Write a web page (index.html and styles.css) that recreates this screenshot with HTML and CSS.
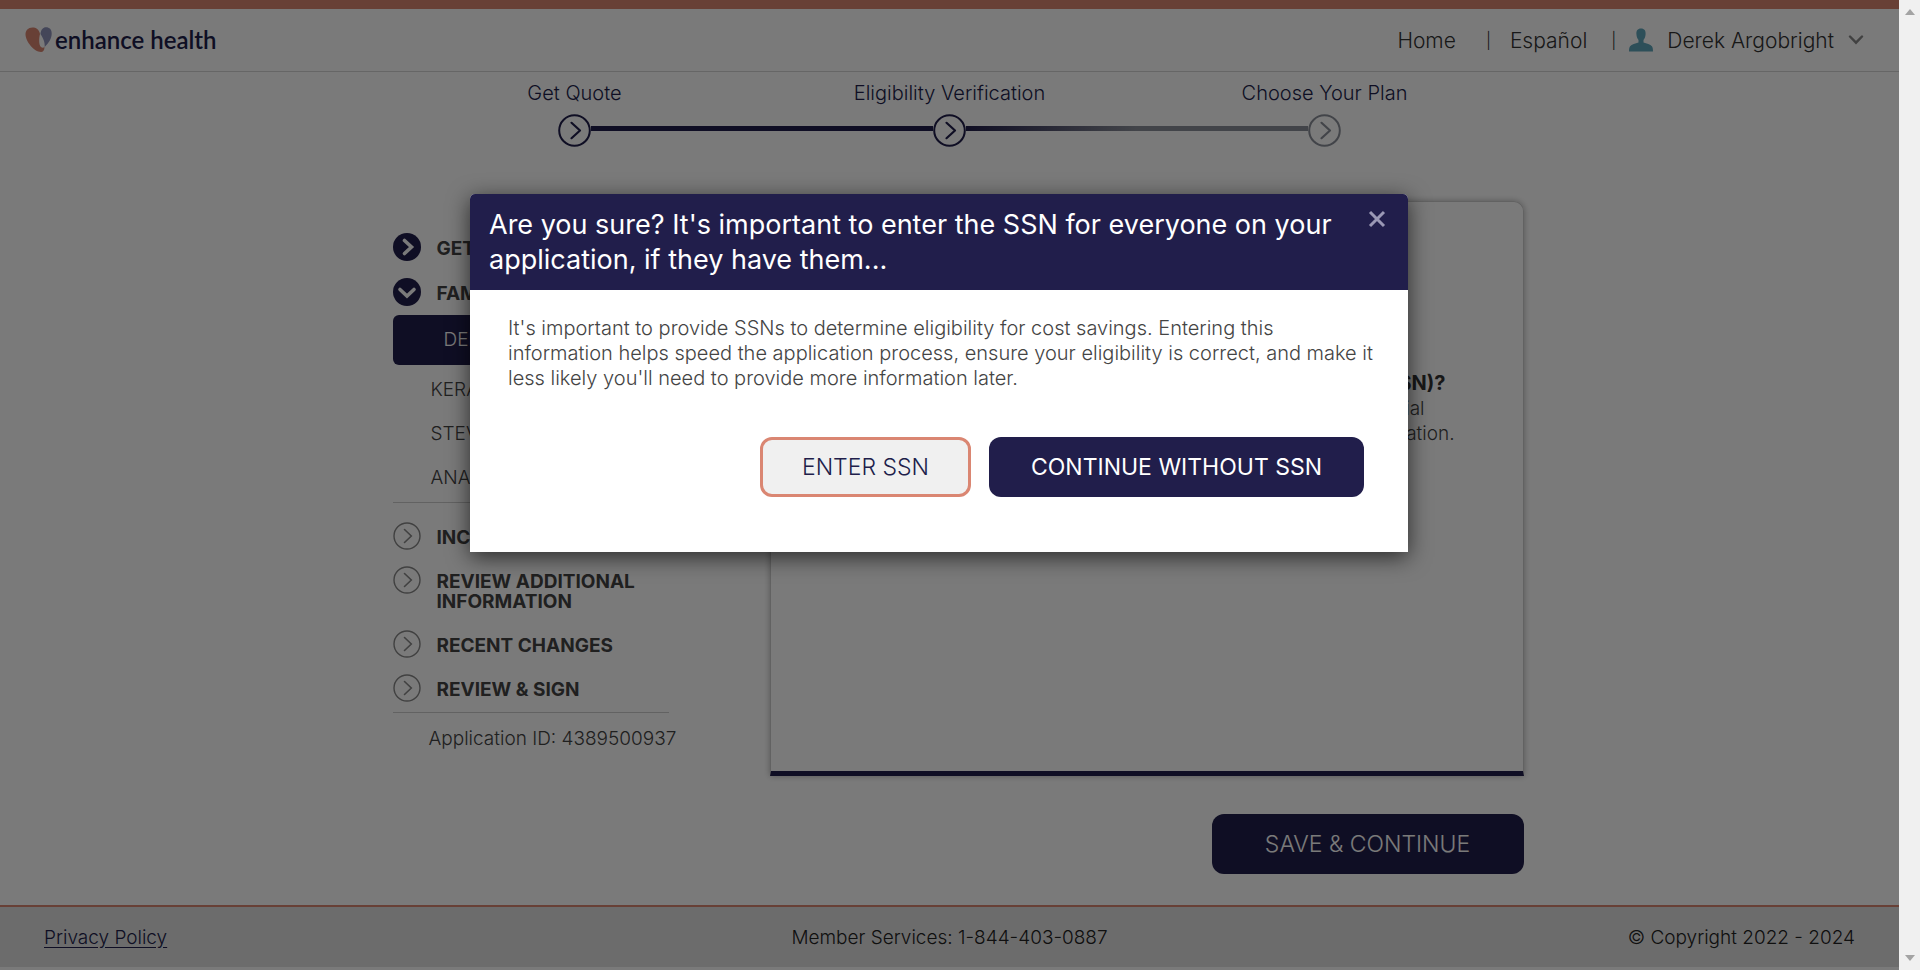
FILE: index.html
```html
<!DOCTYPE html>
<html lang="en">
<head>
<meta charset="utf-8">
<title>Enhance Health - Eligibility Verification</title>
<link rel="stylesheet" href="styles.css">
</head>
<body>
<svg class="defs" aria-hidden="true">
  <symbol id="ring" viewBox="0 0 28 28">
    <circle cx="14" cy="14" r="13" fill="none" stroke="currentColor" stroke-width="1.4"/>
    <path d="M11.5 7.5 18.3 14l-6.8 6.5" fill="none" stroke="currentColor" stroke-width="1.6" stroke-linecap="round"/>
  </symbol>
  <symbol id="step" viewBox="0 0 33 33">
    <circle cx="16.5" cy="16.5" r="15.3" fill="none" stroke="currentColor" stroke-width="2"/>
    <path d="M13.5 8.8 22 16.5l-8.500 7.700" fill="none" stroke="currentColor" stroke-width="2.200" stroke-linecap="round" stroke-linejoin="round"/>
  </symbol>
</svg>
<div class="window">
  <div class="page">
    <header class="header">
      <a class="logo" href="#">
        <svg width="27" height="26" viewBox="0 0 27 26" aria-hidden="true">
          <path d="M15 7C14 2 11 .5 7.500 .5 3 .5.500 3.500.500 7.500.500 14 9 25 16 25c2 0 3.500-1.500 3.500-5-1 1-2.500 1-3.500 0C13.500 17.500 14 11 15 7Z" fill="#da8672"/>
          <path d="M15.500 7C16 2.500 18 .3 21 .3c3.500 0 5.700 2.200 5.700 6.200 0 5-2.700 9-7 13.500C20 14.500 18 11 15.500 7Z" fill="#8f93bb"/>
        </svg>
        <span>enhance health</span>
      </a>
      <nav class="nav">
        <a href="#">Home</a>
        <span class="bar bar-wide">|</span>
        <a href="#">Español</a>
        <span class="bar">|</span>
        <button class="user" type="button">
          <svg width="24" height="24" viewBox="0 0 24 24" aria-hidden="true"><path d="M12 .500c3.500 0 4.800 2.300 4.600 5.500-.1 2.500-.9 4.500-2.100 6v2.500c3 1.200 7 1.800 8.400 3.800.9 1.300 1.100 3.200 1.100 5.200H0c0-2 .2-3.900 1.100-5.200 1.400-2 5.400-2.600 8.400-3.800V12C8.300 10.500 7.500 8.500 7.400 6 7.200 2.800 8.500.500 12 .500Z" fill="#5fa5ba"/></svg>
          <span>Derek Argobright</span>
          <svg class="chev" width="16" height="10" viewBox="0 0 16 10" aria-hidden="true"><path d="M2 1.500 8 7.700l6-6.200" fill="none" stroke="#888" stroke-width="2.400" stroke-linecap="round"/></svg>
        </button>
      </nav>
    </header>

    <ol class="steps">
      <li class="step"><span>Get Quote</span><svg class="dot"><use href="#step"/></svg></li>
      <li class="step done"><span>Eligibility Verification</span><svg class="dot"><use href="#step"/></svg></li>
      <li class="step next"><span>Choose Your Plan</span><svg class="dot"><use href="#step"/></svg></li>
    </ol>

    <main class="main">
      <aside class="side">
        <ul class="list">
          <li class="item"><svg class="ico" viewBox="0 0 28 28"><circle cx="14" cy="14" r="14" fill="#211e4b"/><path d="M11.500 7.500 18.500 14l-7 6.500" fill="none" stroke="#fff" stroke-width="3.600" stroke-linecap="round"/></svg><span>GET</span></li>
          <li class="item open"><svg class="ico" viewBox="0 0 28 28"><circle cx="14" cy="14" r="14" fill="#211e4b"/><path d="M7 11.500 14 18l7-6.500" fill="none" stroke="#fff" stroke-width="3.600" stroke-linecap="round"/></svg><span>FAMILY</span></li>
        </ul>
        <ul class="people">
          <li class="person current">DEREK</li>
          <li class="person">KERA</li>
          <li class="person">STEVEN</li>
          <li class="person">ANA</li>
        </ul>
        <ul class="list later">
          <li class="item"><svg class="ico"><use href="#ring"/></svg><span>INCOME</span></li>
          <li class="item"><svg class="ico"><use href="#ring"/></svg><span>REVIEW ADDITIONAL INFORMATION</span></li>
          <li class="item"><svg class="ico"><use href="#ring"/></svg><span>RECENT CHANGES</span></li>
          <li class="item"><svg class="ico"><use href="#ring"/></svg><span>REVIEW &amp; SIGN</span></li>
        </ul>
        <p class="appid">Application ID: 4389500937</p>
      </aside>
      <section class="content">
        <div class="card">
          <h2 class="question">Social Security number (SSN)?</h2>
          <p class="hint hint-first">Enter the Social</p>
          <p class="hint">Security number for the application.</p>
        </div>
        <button class="btn save" type="button">SAVE &amp; CONTINUE</button>
      </section>
    </main>

    <footer class="footer">
      <a href="#">Privacy Policy</a>
      <span>Member Services: 1-844-403-0887</span>
      <span class="copy">© Copyright 2022 - 2024</span>
    </footer>

    <div class="overlay">
      <div class="modal" role="dialog" aria-modal="true" aria-labelledby="modal-title">
        <div class="modal-head">
          <h1 id="modal-title">Are you sure? It's important to enter the SSN for everyone on your application, if they have them...</h1>
          <button class="close" type="button" aria-label="Close"><svg width="18" height="18" viewBox="0 0 18 18"><path d="M2 2 16 16M16 2 2 16" stroke="#9a98b5" stroke-width="3"/></svg></button>
        </div>
        <div class="modal-body">
          <p>It's important to provide SSNs to determine eligibility for cost savings. Entering this<br>information helps speed the application process, ensure your eligibility is correct, and make it<br>less likely you'll need to provide more information later.</p>
          <div class="actions">
            <button class="btn outline" type="button">ENTER SSN</button>
            <button class="btn primary" type="button">CONTINUE WITHOUT SSN</button>
          </div>
        </div>
      </div>
    </div>
  </div>
  <div class="scroll" aria-hidden="true">
    <svg width="10" height="6" viewBox="0 0 10 6"><path d="M0 6 5 0l5 6Z" fill="#a3a3a3"/></svg>
    <svg width="10" height="6" viewBox="0 0 10 6"><path d="M0 0 5 6l5-6Z" fill="#a3a3a3"/></svg>
  </div>
</div>
</body>
</html>
```
FILE: styles.css
```css
* { box-sizing: border-box; }
body { margin: 0; font: 300 19px/25px Inter, "Open Sans", sans-serif; color: #444; background: #fff; }
ul, ol { margin: 0; padding: 0; list-style: none; }
h1, h2, p { margin: 0; }
a { color: inherit; text-decoration: none; }
button { font: inherit; color: inherit; cursor: pointer; background: none; border: 0; padding: 0; }
.defs { position: absolute; width: 0; height: 0; }
.window { display: flex; min-height: 100vh; }
.page { position: relative; flex: 1; display: flex; flex-direction: column; padding-bottom: 3px; }
.scroll { width: 21px; background: #f0f0f0; display: flex; flex-direction: column; justify-content: space-between; align-items: center; padding: 9px 0; }

.header { display: flex; justify-content: space-between; align-items: center; height: 72px; border-top: 9px solid #da8672; border-bottom: 1px solid #d5d5d5; padding: 0 35px 0 25px; color: #333; font-size: 21px; }
.logo { display: flex; align-items: center; gap: 3px; font: 600 24px/26px Lato, sans-serif; color: #211e4b; }
.nav { display: flex; align-items: center; }
.bar { margin: 0 13px 0 24px; font-size: 16px; }
.bar-wide { margin: 0 19px 0 30px; }
.user { display: flex; align-items: center; gap: 14px; }

.steps { display: flex; justify-content: center; padding-top: 9px; color: #211e4b; font-size: 20px; }
.step { position: relative; width: 375px; display: flex; flex-direction: column; align-items: center; gap: 8px; }
.dot { width: 33px; height: 33px; }
.step + .step::before { content: ""; position: absolute; left: -171px; bottom: 16px; width: 342px; height: 5px; background: #211e4b; }
.step.next::before { background: linear-gradient(90deg, #211e4b, #8b8f99 50%); }
.next .dot { color: #8b8f99; }

.main { display: flex; justify-content: space-between; width: 1150px; margin: 54px auto 0; padding: 0 1px 0 18px; }
.side { width: 300px; padding-top: 32px; }
.item { display: flex; gap: 16px; padding-bottom: 17px; font-size: 19px; font-weight: 700; line-height: 20px; }
.item span { width: 222px; padding: 6px 0 2px; }
.item.open { padding-bottom: 9px; }
.ico { width: 28px; height: 28px; flex: none; color: #888; }
.people { width: 276px; padding-bottom: 2px; border-bottom: 1px solid #ccc; }
.person { padding-left: 38px; line-height: 44px; }
.person.current { padding-left: 51px; margin-bottom: 3px; line-height: 50px; border-radius: 6px; background: #211e4b; color: #fff; }
.later { width: 276px; padding-top: 19px; border-bottom: 1px solid #ccc; }
.later .item { padding-bottom: 16px; }
.later .item:last-child { padding-bottom: 10px; }
.appid { padding: 13px 0 0 36px; }

.content { width: 754px; display: flex; flex-direction: column; align-items: flex-end; gap: 38px; }
.card { width: 100%; min-height: 575px; padding: 168px 68px 0; text-align: right; border: 1px solid #ccc; border-bottom: 5px solid #211e4b; border-radius: 10px 10px 0 0; box-shadow: 0 0 6px rgba(0, 0, 0, .3); }
.question { padding-right: 9px; font-size: 20px; line-height: 26px; font-weight: 700; color: #333; }
.hint-first { padding-right: 30px; }
.btn { height: 60px; border-radius: 12px; font-size: 23px; line-height: 28px; text-align: center; }
.save { width: 312px; background: #211e4b; color: #fff; }

.footer { display: grid; grid-template-columns: 1fr auto 1fr; align-items: center; height: 62px; margin-top: auto; padding: 0 44px; border-top: 2px solid #da8672; background: #e2e2e2; color: #222; }
.footer a { color: #211e4b; text-decoration: underline; text-underline-offset: 3px; }
.copy { text-align: right; }

.overlay { position: absolute; inset: 0; display: flex; justify-content: center; align-items: flex-start; padding: 194px 21px 0 0; background: rgba(0, 0, 0, .52); }
.modal { width: 938px; min-height: 358px; border-radius: 5px 5px 0 0; background: #fff; box-shadow: 0 5px 22px rgba(0, 0, 0, .65); }
.modal-head { display: flex; justify-content: space-between; align-items: flex-start; height: 96px; padding: 13px 22px 0 19px; border-radius: 5px 5px 0 0; background: #211e4b; color: #fff; }
.modal-head h1 { width: 860px; font-size: 27px; line-height: 35px; font-weight: 400; }
.close { display: flex; padding-top: 3px; }
.modal-body { padding: 26px 24px 0 38px; color: #444; font-size: 20px; }
.actions { display: flex; justify-content: flex-end; gap: 18px; margin: 46px 20px 0 0; }
.outline { width: 211px; border: 3px solid #da8672; background: #f0f0f0; color: #211e4b; }
.primary { width: 375px; background: #211e4b; color: #fff; font-weight: 400; }
```
